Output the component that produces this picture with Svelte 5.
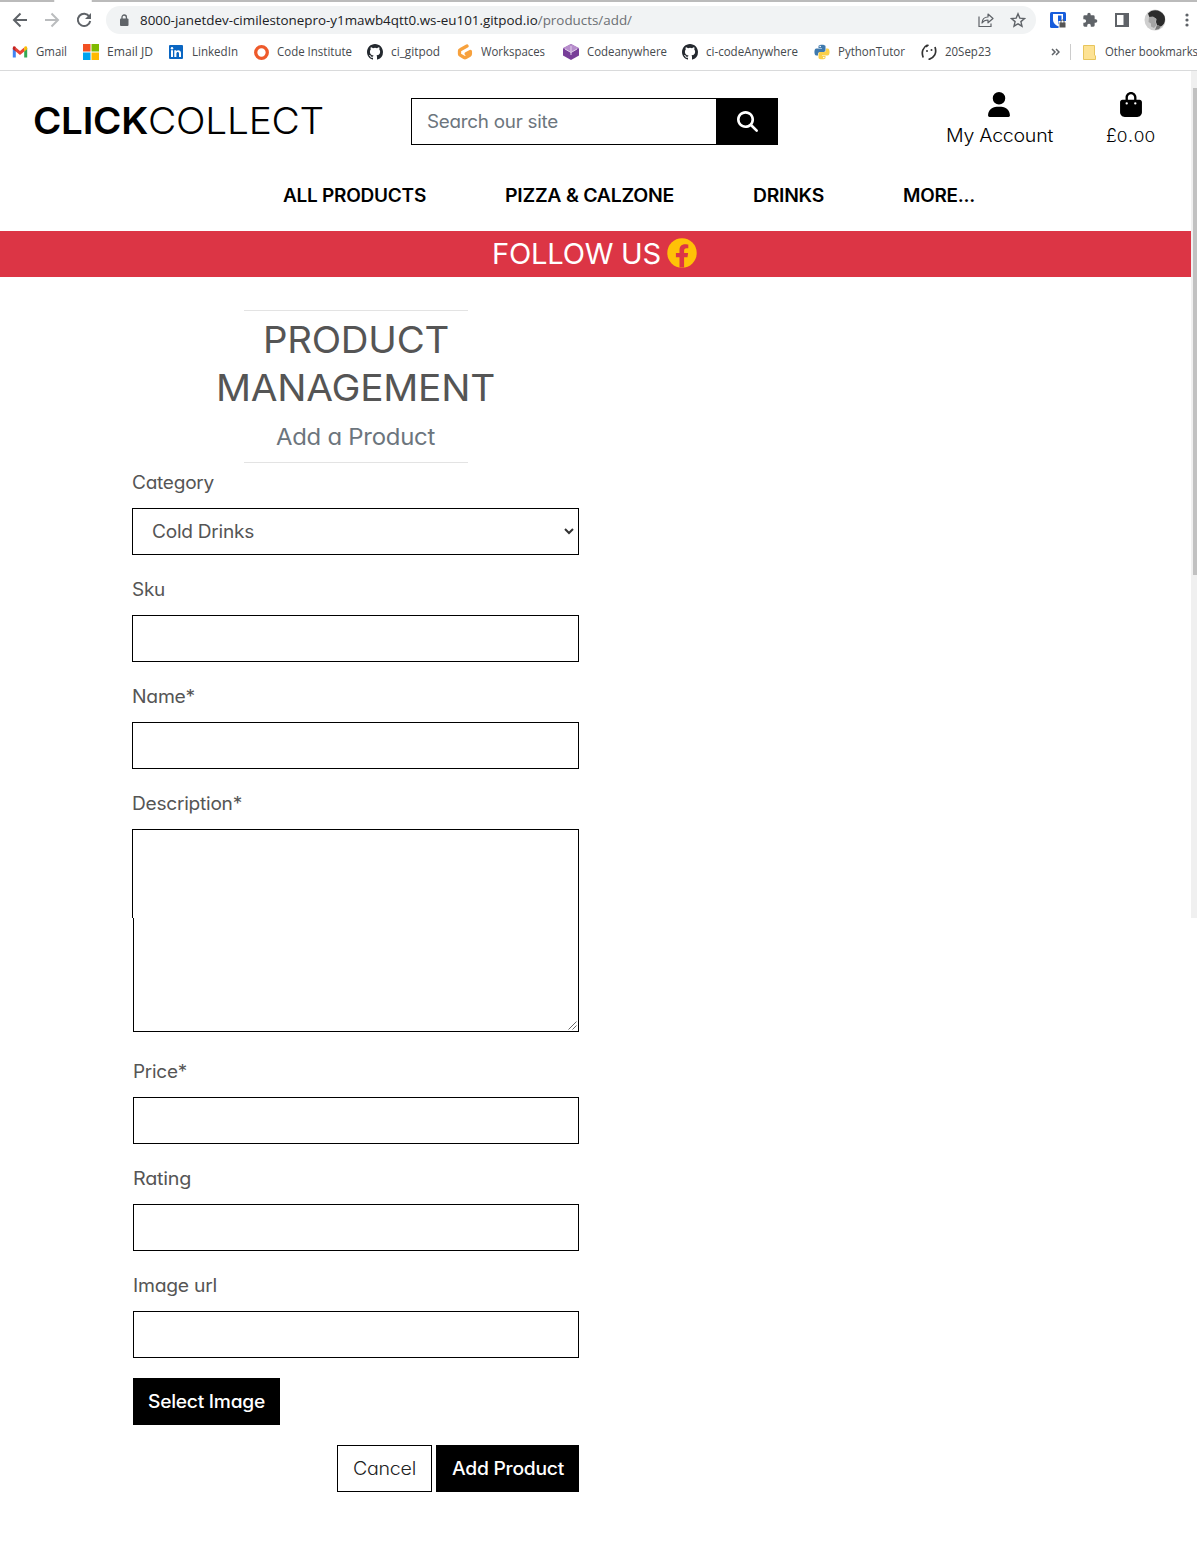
<script>
  // Stretches a single line of text to a set width, keeping the flow around it in step.
  function fit(node, width) {
    const natural = node.getBoundingClientRect().width;
    node.style.transform = `scaleX(${width / natural})`;
    node.style.marginRight = `${width - natural}px`;
  }

  const bookmarks = [
    { icon: 'gmail', label: 'Gmail', w: 31 },
    { icon: 'ms', label: 'Email JD', w: 46 },
    { icon: 'linkedin', label: 'LinkedIn', w: 46 },
    { icon: 'ring', label: 'Code Institute', w: 75 },
    { icon: 'github', label: 'ci_gitpod', w: 49 },
    { icon: 'gitpod', label: 'Workspaces', w: 64 },
    { icon: 'cube', label: 'Codeanywhere', w: 80 },
    { icon: 'github', label: 'ci-codeAnywhere', w: 92 },
    { icon: 'python', label: 'PythonTutor', w: 67 },
    { icon: 'face', label: '20Sep23', w: 46 }
  ];

  const nav = [
    { label: 'ALL PRODUCTS', w: 143 },
    { label: 'PIZZA & CALZONE', w: 169 },
    { label: 'DRINKS', w: 71 },
    { label: 'MORE...', w: 72 }
  ];
</script>

<div class="screen">
  <header class="chrome">
    <div class="tabs"><i></i></div>
    <div class="toolbar">
      <svg class="back" width="16" height="16" viewBox="0 0 16 16" fill="none" stroke="#5f6368" stroke-width="2"><path d="M15 8H2.5M8.5 1.5 2 8l6.500 6.500" /></svg>
      <svg class="fwd" width="16" height="16" viewBox="0 0 16 16" fill="none" stroke="#babcbe" stroke-width="2"><path d="M1 8h12.500M7.500 1.500 14 8l-6.500 6.500" /></svg>
      <svg class="reload" width="16" height="16" viewBox="0 0 16 16" fill="none" stroke="#5f6368" stroke-width="2"><path d="M13.300 4.500A6.200 6.200 0 1 0 14.200 9" /><path d="M15 1v6H9z" fill="#5f6368" stroke="none" /></svg>
      <div class="omni">
        <svg width="10" height="13" viewBox="0 0 10 13"><rect x="1" y="4.500" width="8.500" height="7.500" rx="1" fill="#5f6368" /><path d="M3 5V3.200a2.200 2.200 0 0 1 4.400 0V5" fill="none" stroke="#5f6368" stroke-width="1.300" /></svg>
        <span class="url" use:fit={492}>8000-janetdev-cimilestonepro-y1mawb4qtt0.ws-eu101.gitpod.io<em>/products/add/</em></span>
        <svg class="share" width="16" height="16" viewBox="0 0 16 16" fill="none" stroke="#5f6368" stroke-width="1.200"><path d="M1 4.500v10h12v-3" /><path d="M4 11c.3-4 2.500-6 6-6V2l5 4.500-5 4.300V8C7.500 8 5.500 8.800 4 11z" stroke-linejoin="round" /></svg>
        <svg class="star" width="16" height="16" viewBox="0 0 16 16" fill="none" stroke="#5f6368" stroke-width="1.400"><path d="m8 1.800 1.800 4.300 4.700.4-3.600 3.100 1.100 4.600L8 11.800l-4 2.400 1.100-4.600L1.500 6.500l4.700-.4z" /></svg>
      </div>
      <div class="ext">
        <svg width="16" height="16" viewBox="0 0 16 16"><rect width="16" height="16" rx="1.500" fill="#175ddc" /><path d="M3 2h10v6c0 3-2.500 5-5 6.300C5.500 13 3 11 3 8z" fill="#fff" /><path d="M8 3.500h3.500V8c0 2-1.700 3.500-3.500 4.500z" fill="#175ddc" /><path d="M8.500 9h7.500v7H8.500z" fill="#fff" /><path d="M9.500 10.500H15.500V15.500H9.500z" fill="#555" /><path d="M11 11V9.500a1.500 1.500 0 0 1 3 0V11" fill="none" stroke="#555" /></svg>
        <svg width="16" height="16" viewBox="0 0 24 24"><path fill="#5f6368" d="M20.500 11H19V7a2 2 0 0 0-2-2h-4V3.500a2.500 2.500 0 0 0-5 0V5H4a2 2 0 0 0-2 2v3.800h1.500a2.700 2.700 0 0 1 0 5.400H2V20c0 1.100.9 2 2 2h3.800v-1.500a2.700 2.700 0 0 1 5.400 0V22H17a2 2 0 0 0 2-2v-4h1.500a2.500 2.500 0 0 0 0-5z" /></svg>
        <svg width="16" height="16" viewBox="0 0 16 16"><path fill="#5f6368" fill-rule="evenodd" d="M1 1h14v14H1zM3 3v10h6.500V3z" /></svg>
        <svg class="avatar" width="22" height="22" viewBox="0 0 22 22"><circle cx="11" cy="11" r="10.500" fill="#cfcfcf" /><path d="M4 4.500C8-.5 17 0 20.500 7c1.500 5-.5 9-3.500 10.500l-4-1.500-1-3 .5-3-3-2-4 .5z" fill="#2b2b2b" /><path d="M5 8l4-.5 3 2.500-.5 3 1 3-2.500 3-3-1.500v-3L4.500 13z" fill="#a5a5a5" /><path d="m13 16 4 1.500-2 2.500-4 1z" fill="#777" /></svg>
        <svg class="dots" width="4" height="16" viewBox="0 0 4 16" fill="#5f6368"><circle cx="2" cy="3" r="1.600" /><circle cx="2" cy="8" r="1.600" /><circle cx="2" cy="13" r="1.600" /></svg>
      </div>
    </div>
    <div class="bookmarks">
      {#each bookmarks as b}
        <div class="bm">
          <svg width="16" height="16" viewBox="0 0 16 16">
            {#if b.icon === 'gmail'}
              <path d="M.8 4v9.500h3V6z" fill="#4285f4" /><path d="M15.200 4v9.500h-3V6z" fill="#34a853" /><path d="M3.800 3.500 8 7l4.200-3.500v4L8 11 3.800 7.500z" fill="#ea4335" /><path d="M.8 5.200V4c0-1.800 1.700-2.200 3-1v4.500z" fill="#c5221f" /><path d="M15.200 5.200V4c0-1.800-1.700-2.200-3-1v4.500z" fill="#fbbc04" />
            {:else if b.icon === 'ms'}
              <path d="M0 0h7.500v7.500H0z" fill="#f25022" /><path d="M8.500 0H16v7.500H8.500z" fill="#7fba00" /><path d="M0 8.500h7.500V16H0z" fill="#00a4ef" /><path d="M8.500 8.500H16V16H8.500z" fill="#ffb900" />
            {:else if b.icon === 'linkedin'}
              <rect x="1" y="1" width="14" height="14" rx="1" fill="#0a66c2" /><path d="M3 6.300h2V13H3zM6.300 6.300h2v.9c1-1.600 4.700-1.500 4.700 1.900V13h-2V9.600c0-2.200-2.600-2-2.600 0V13h-2.100z" fill="#fff" /><circle cx="4" cy="4.200" r="1.200" fill="#fff" />
            {:else if b.icon === 'ring'}
              <circle cx="8.500" cy="8.500" r="5.800" fill="none" stroke="#ee5a2b" stroke-width="3.300" />
            {:else if b.icon === 'github'}
              <path fill="#24292f" d="M8 0C3.580 0 0 3.580 0 8c0 3.540 2.290 6.530 5.470 7.590.4.070.55-.17.55-.38 0-.19-.01-.82-.01-1.490-2.010.37-2.530-.49-2.690-.94-.09-.23-.48-.94-.82-1.130-.28-.15-.68-.52-.01-.53.630-.01 1.080.58 1.230.82.720 1.210 1.870.87 2.330.66.070-.52.280-.87.510-1.070-1.780-.2-3.640-.89-3.640-3.950 0-.87.310-1.590.82-2.150-.08-.2-.36-1.020.08-2.120 0 0 .67-.21 2.200.82a7.420 7.420 0 0 1 4 0c1.530-1.040 2.200-.82 2.200-.82.440 1.100.16 1.920.08 2.120.51.560.82 1.270.82 2.150 0 3.070-1.870 3.750-3.650 3.950.29.250.54.730.54 1.480 0 1.070-.01 1.930-.01 2.200 0 .21.150.46.550.38A8.010 8.010 0 0 0 16 8c0-4.420-3.580-8-8-8z" />
            {:else if b.icon === 'gitpod'}
              <path d="M10 2 3.300 5.700c-.6.300-.8.600-.8 1.200v3.200c0 .5.200.8.700 1.100l4 2.300c.5.300 1 .3 1.500 0l4-2.300c.5-.3.700-.6.700-1.100V7.500L9.200 9.800" fill="none" stroke="#f7a13d" stroke-width="3.300" stroke-linejoin="round" stroke-linecap="round" />
            {:else if b.icon === 'cube'}
              <path d="M8 0 16 4.500v7L8 16l-8-4.500v-7z" fill="#783f99" /><path d="M8 0 16 4 8 8.500 0 4z" fill="#b78dcc" /><path d="M8 2v9M2 5l6 3.500L14 5" stroke="#dfd0e9" stroke-width="1" fill="none" />
            {:else if b.icon === 'python'}
              <path d="M4.500 2.300C4.500.3 11.500.3 11.500 2.300v4c0 1-.7 1.700-1.700 1.700H6C4.800 8 4 9 4 10v1.500H2.300C-.2 11.500-.2 4.500 2.300 4.500H8V4H4.500z" fill="#3f79ad" /><path d="M11.500 13.700c0 2-7 2-7 0v-4C4.500 8.700 5.200 8 6.200 8H10c1.200 0 2-1 2-2V4.500h1.700c2.500 0 2.500 7 0 7H8v.5h3.500z" fill="#fbd04a" /><circle cx="6.200" cy="2.500" r=".8" fill="#fff" /><circle cx="9.800" cy="13.500" r=".8" fill="#fff" />
            {:else}
              <path d="M6.500 1C2 3 0 8 2.200 13.500M14 3c2 6-.5 11-6.500 12.500" fill="none" stroke="#333" stroke-width="1.700" /><path d="M7.500.8 5 2.800" stroke="#333" stroke-width="1.500" /><circle cx="6" cy="7" r="1" fill="#333" /><circle cx="10.500" cy="6" r="1" fill="#333" />
            {/if}
          </svg>
          <span use:fit={b.w}>{b.label}</span>
        </div>
      {/each}
      <svg class="more" width="9" height="8" viewBox="0 0 9 8" fill="none" stroke="#5f6368" stroke-width="1.500"><path d="m1 1 3 3-3 3M5 1l3 3-3 3" /></svg>
      <div class="other">
        <svg width="13" height="15" viewBox="0 0 13 15"><path d="M.5.500h11v9.500l1 1v3.500H.5z" fill="#fde293" stroke="#e7c55c" /></svg>
        <span use:fit={93}>Other bookmarks</span>
      </div>
    </div>
  </header>

  <div class="view">
    <main>
      <div class="top">
        <h1><b use:fit={115}>CLICK</b><span use:fit={176}>COLLECT</span></h1>
        <div class="search">
          <div class="query"><span use:fit={131}>Search our site</span></div>
          <button aria-label="Search"><svg width="21" height="21" viewBox="0 0 512 512" fill="#fff"><path d="M416 208c0 45.900-14.900 88.300-40 122.700L502.600 457.400c12.500 12.500 12.500 32.800 0 45.300s-32.800 12.500-45.300 0L330.700 376c-34.400 25.200-76.800 40-122.700 40C93.100 416 0 322.900 0 208S93.100 0 208 0S416 93.100 416 208zM208 352a144 144 0 1 0 0-288 144 144 0 1 0 0 288z" /></svg></button>
        </div>
        <div class="link account">
          <svg width="22" height="25" viewBox="0 0 448 512"><path d="M224 256A128 128 0 1 0 224 0a128 128 0 1 0 0 256zm-45.700 48C79.800 304 0 383.800 0 482.300C0 498.700 13.300 512 29.700 512H418.300c16.400 0 29.700-13.300 29.700-29.700C448 383.800 368.200 304 269.700 304H178.300z" /></svg>
          <div><span use:fit={107}>My Account</span></div>
        </div>
        <div class="link bag">
          <svg width="22" height="25" viewBox="0 0 448 512"><path d="M160 112c0-35.300 28.700-64 64-64s64 28.700 64 64v48H160V112zm-48 48H48c-26.500 0-48 21.500-48 48V416c0 53 43 96 96 96H352c53 0 96-43 96-96V208c0-26.500-21.500-48-48-48H336V112C336 50.100 285.900 0 224 0S112 50.100 112 112v48zm24 48a24 24 0 1 1 0 48 24 24 0 1 1 0-48zm152 24a24 24 0 1 1 48 0 24 24 0 1 1 -48 0z" /></svg>
          <div><span use:fit={50}>£<small>0</small>.<small>0</small><small>0</small></span></div>
        </div>
      </div>

      <nav>
        {#each nav as n}<span use:fit={n.w}>{n.label}</span>{/each}
      </nav>

      <div class="follow">
        <span use:fit={169}>FOLLOW US</span>
        <svg width="30" height="30" viewBox="0 0 30 30"><circle cx="15" cy="15" r="14.700" fill="#ffc107" /><path d="M12.500 29.500V19.300H8.900v-4.200h3.600v-3c0-3.700 2.200-5.800 5.600-5.800 1.600 0 3.200.3 3.200.3v3.600h-1.800c-1.800 0-2.400 1.100-2.400 2.300v2.600h4l-.6 4.200h-3.400v10.200z" fill="#dc3545" /></svg>
      </div>

      <section class="panel">
        <div class="title">
          <hr />
          <h2><span use:fit={186}>PRODUCT</span><br /><span use:fit={279}>MANAGEMENT</span></h2>
          <h5><span use:fit={159}>Add a Product</span></h5>
          <hr />
        </div>

        <div class="field">
          <div class="label"><span use:fit={82}>Category</span></div>
          <div class="box select">
            <span use:fit={102}>Cold Drinks</span>
            <svg width="10" height="7" viewBox="0 0 10 7" fill="none" stroke="#333" stroke-width="2"><path d="m1 1 4 4 4-4" /></svg>
          </div>
        </div>
        <div class="field">
          <div class="label"><span use:fit={33}>Sku</span></div>
          <div class="box"></div>
        </div>
        <div class="field">
          <div class="label"><span use:fit={63}>Name*</span></div>
          <div class="box"></div>
        </div>
        <div class="field tall">
          <div class="label"><span use:fit={110}>Description*</span></div>
          <div class="area"><svg width="9" height="9" viewBox="0 0 9 9" stroke="#666" fill="none"><path d="M.5 8.500l8-8M4.500 8.500l4-4" /></svg></div>
        </div>
        <div class="lower">
          <div class="field">
            <div class="label"><span use:fit={54}>Price*</span></div>
            <div class="box"></div>
          </div>
          <div class="field">
            <div class="label"><span use:fit={58}>Rating</span></div>
            <div class="box"></div>
          </div>
          <div class="field">
            <div class="label"><span use:fit={84}>Image url</span></div>
            <div class="box"></div>
          </div>
          <button class="btn dark pick"><span use:fit={117}>Select Image</span></button>
          <div class="actions">
            <button class="btn light"><span use:fit={63}>Cancel</span></button>
            <button class="btn dark add"><span use:fit={112}>Add Product</span></button>
          </div>
        </div>
      </section>
    </main>
    <aside class="scroll"><i></i></aside>
  </div>
</div>

<style>
  :global(body) { background: #fff; overflow: hidden; }
  * { box-sizing: border-box; }
  .screen { width: 1197px; height: 1542px; overflow: hidden; background: #fff; font-family: Inter, "Liberation Sans", sans-serif; font-feature-settings: "cv11"; letter-spacing: -0.015em; color: #555; }
  span, b { white-space: nowrap; transform-origin: 0 50%; }
  span { display: inline-block; }
  svg { display: block; flex: none; }
  button { font: inherit; font-feature-settings: inherit; letter-spacing: inherit; border: 0; padding: 0; }

  .chrome { height: 71px; border-bottom: 1px solid #d9dadb; font-family: "Open Sans", "Noto Sans", sans-serif; font-feature-settings: normal; letter-spacing: 0; }
  .tabs { height: 2px; background: #bbb; }
  .tabs i { display: block; width: 38px; height: 2px; margin-left: 54px; background: #fff; border-radius: 1px; }
  .toolbar { display: flex; align-items: center; height: 36px; padding-left: 12px; }
  .back, .fwd { margin-right: 16px; }
  .reload { margin-right: 14px; }
  .omni { display: flex; flex: none; align-items: center; width: 930px; height: 28px; border-radius: 14px; background: #f1f3f4; padding-left: 13px; }
  .url { margin-left: 11px; font-size: 13px; color: #202124; }
  .url em { font-style: normal; color: #6b6f73; }
  .omni .share { margin-left: auto; }
  .star { margin: 0 10px 0 16px; }
  .ext { display: flex; flex: none; align-items: center; gap: 16px; padding-left: 14px; }
  .avatar { margin: 0 -3px 0 -2px; }
  .dots { margin-left: 6px; }
  .bookmarks { display: grid; align-items: center; grid-template-columns: 71px 85px 85px 114px 90px 106px 119px 132px 107px 130px 19px 1fr; height: 28px; padding-left: 12px; font-size: 12px; line-height: 16px; color: #45494d; }
  .bm { display: flex; align-items: center; gap: 8px; }
  .bm span, .other span { margin-top: -1px; }
  .other { display: flex; align-items: center; height: 16px; border-left: 1px solid #ccc; padding-left: 12px; gap: 9px; }

  .view { display: flex; height: 1471px; }
  main { width: 1191px; flex: none; }
  .scroll { width: 6px; height: 847px; background: #f0f0f0; padding: 17px 0 0 2px; }
  .scroll i { display: block; height: 487px; background: #c1c1c1; }

  .top { display: flex; height: 101px; padding: 21px 0 0 33px; color: #000; }
  h1 { display: flex; flex: none; width: 378px; margin: 6px 0 0; font-size: 37px; line-height: 46px; font-weight: 300; }
  h1 b { display: inline-block; font-weight: 600; }
  .search { display: flex; flex: none; width: 367px; height: 47px; margin-top: 6px; }
  .query { width: 305px; border: 1px solid #000; border-right: 0; padding-left: 15px; color: #6c757d; font-size: 18px; line-height: 45px; }
  .search button { display: grid; place-items: center; width: 62px; background: #000; }
  .link { display: flex; flex: none; flex-direction: column; align-items: center; font-size: 18px; line-height: 24px; font-weight: 300; gap: 7px; }
  .account { margin-left: 168px; width: 106px; }
  .bag { margin-left: 54px; width: 50px; }
  small { display: inline-block; margin: 0 1.500px; font-size: 14px; letter-spacing: 0; transform: scaleX(1.250); }

  nav { display: flex; gap: 79px; height: 59px; padding: 12px 0 0 283px; font-size: 18px; line-height: 24px; font-weight: 600; color: #000; }
  .follow { display: flex; justify-content: center; gap: 6px; height: 46px; padding: 7px 2px 0 0; background: #dc3545; color: #fff; font-size: 28px; line-height: 32px; }

  .panel { width: 447px; margin-left: 132px; padding-top: 33px; font-size: 18px; }
  .title { height: 161px; text-align: center; }
  hr { width: 224px; height: 1px; margin: 0 auto; border: 0; background: #e3e3e3; }
  h2 { margin: 5px 0 0; font-size: 37px; line-height: 48px; font-weight: 400; }
  h5 { height: 50px; margin: 0; padding-top: 9px; font-size: 22.500px; line-height: 32px; font-weight: 400; color: #6c757d; }
  .field { margin-bottom: 23px; }
  .label { height: 37px; line-height: 24px; }
  .box { height: 47px; border: 1px solid #000; }
  .select { display: flex; align-items: center; justify-content: space-between; padding: 0 4px 0 19px; }
  .tall { margin-bottom: 28px; }
  .area {
    display: flex; align-items: flex-end; justify-content: flex-end; height: 203px; padding: 0 2px 2px 0;
    background:
      linear-gradient(#000, #000) 0 0 / 447px 1px no-repeat,
      linear-gradient(#000, #000) 100% 0 / 1px 203px no-repeat,
      linear-gradient(#000, #000) 0 0 / 1px 89px no-repeat,
      linear-gradient(#000, #000) 1px 89px / 1px 114px no-repeat,
      linear-gradient(#000, #000) 1px 100% / 446px 1px no-repeat;
  }
  .lower { margin-left: 1px; }
  .lower .field:nth-child(3) { margin-bottom: 20px; }
  .btn { display: block; height: 47px; text-align: center; font-size: 18px; }
  .dark { background: #000; color: #fff; font-weight: 500; }
  .light { width: 95px; border: 1px solid #000; background: #fff; color: #222; font-weight: 300; }
  .pick { width: 147px; }
  .add { width: 143px; }
  .actions { display: flex; justify-content: flex-end; gap: 4px; margin-top: 20px; }
</style>
